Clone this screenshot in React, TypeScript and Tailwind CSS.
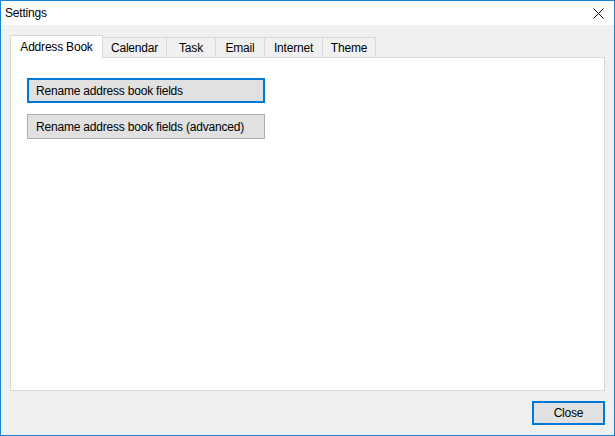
import React from 'react';

const tabs = ['Address Book', 'Calendar', 'Task', 'Email', 'Internet', 'Theme'];
const tabWidths = ['w-[93px]', 'w-[64px]', 'w-[49px]', 'w-[49px]', 'w-[58px]', 'w-[53px]'];

export default function App() {
    return (
        <div
            className="w-[615px] h-[436px] border border-[#1883d7] bg-[#f0f0f0] flex flex-col text-[12px] tracking-[-0.2px] text-black overflow-hidden"
            style={{ fontFamily: '"Liberation Sans", Arial, sans-serif' }}
        >
            {/* Title bar */}
            <div className="h-[24px] bg-white flex items-center justify-between pl-[4px] pr-[10px] shrink-0">
                <span className="text-[12px] mt-[-1px]">Settings</span>
                <svg width="11" height="11" viewBox="0 0 11 11" className="mt-[1px]">
                    <path d="M0.5 0.5 L10.5 10.5 M10.5 0.5 L0.5 10.5" stroke="#111" strokeWidth="1" />
                </svg>
            </div>

            {/* Body */}
            <div className="flex-1 flex flex-col px-[9px] pt-[10px]">
                {/* Tabs */}
                <div className="flex items-end relative z-10 -mb-px h-[23px]">
                    {tabs.map((t, i) =>
                        i === 0 ? (
                            <div
                                key={t}
                                className={`${tabWidths[i]} h-[23px] bg-white border border-b-0 border-[#d9d9d9] flex items-center justify-center pb-[1px]`}
                            >
                                {t}
                            </div>
                        ) : (
                            <div
                                key={t}
                                className={`${tabWidths[i]} h-[20px] bg-[#f0f0f0] border border-l-0 border-b-0 border-[#d9d9d9] flex items-center justify-center mb-px`}
                            >
                                {t}
                            </div>
                        )
                    )}
                </div>

                {/* Panel */}
                <div className="h-[334px] bg-white border border-[#d9d9d9] flex flex-col gap-[11px] pl-[16px] pt-[20px] shrink-0">
                    <button className="w-[238px] h-[25px] bg-[#e1e1e1] border-2 border-[#0078d7] text-left pl-[7px]">
                        Rename address book fields
                    </button>
                    <button className="w-[238px] h-[25px] bg-[#e1e1e1] border border-[#adadad] text-left pl-[8px]">
                        Rename address book fields (advanced)
                    </button>
                </div>

                {/* Footer */}
                <div className="flex justify-end pt-[10px]">
                    <button className="w-[73px] h-[24px] bg-[#e1e1e1] border-2 border-[#0078d7] flex items-center justify-center">
                        Close
                    </button>
                </div>
            </div>
        </div>
    );
}
